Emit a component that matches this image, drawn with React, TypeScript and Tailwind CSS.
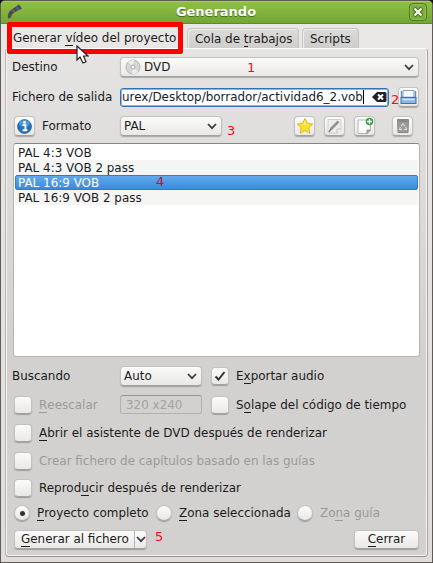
import type { ReactNode } from 'react';

const raised =
  'border border-[#c3c2c0] border-b-[#a3a2a0] bg-gradient-to-b from-[#fbfbfa] to-[#e9e8e6] shadow-[0_1px_1px_rgba(0,0,0,0.25)]';

function Chevron() {
  return (
    <svg width="10" height="7" viewBox="0 0 10 7" className="shrink-0">
      <path d="M1 1 L5 5.2 L9 1" fill="none" stroke="#3a3a3a" strokeWidth="1.7" />
    </svg>
  );
}

function Key({ children }: { children: ReactNode }) {
  return <span className="border-b border-current leading-none inline-block h-[13px]">{children}</span>;
}

function Row({ className, children }: { className: string; children: ReactNode }) {
  return <div className={`flex shrink-0 items-center ${className}`}>{children}</div>;
}

function Combo({ className, children }: { className: string; children: ReactNode }) {
  return (
    <div className={`flex h-5 shrink-0 items-center justify-between rounded-[4px] pr-[4px] pl-[3px] ${raised} ${className}`}>
      <span className="flex items-center">{children}</span>
      <Chevron />
    </div>
  );
}

function Check({ checked = false }: { checked?: boolean }) {
  return (
    <span className={`mr-[7px] flex size-[18px] shrink-0 items-center justify-center rounded-[4px] ${raised}`}>
      {checked && (
        <svg width="12" height="12" viewBox="0 0 12 12">
          <path d="M1.5 6.5 L4.5 9.5 L10.5 2" fill="none" stroke="#333" strokeWidth="2" />
        </svg>
      )}
    </span>
  );
}

function Radio({ checked = false }: { checked?: boolean }) {
  return (
    <span className={`mr-[7px] flex size-4 shrink-0 items-center justify-center rounded-full ${raised}`}>
      {checked && <span className="size-[5px] rounded-full bg-[#333]" />}
    </span>
  );
}

function Tool({ className = '', children }: { className?: string; children: ReactNode }) {
  return (
    <span className={`flex h-5 w-[21px] shrink-0 items-center justify-center rounded-[4px] ${raised} ${className}`}>
      {children}
    </span>
  );
}

function Note({ className, children }: { className: string; children: ReactNode }) {
  return <span className={`absolute text-[13px] leading-4 ${className}`}>{children}</span>;
}

export default function App() {
  return (
    <div className="relative flex h-[563px] w-[433px] flex-col overflow-hidden bg-[#111] font-['DejaVu_Sans',sans-serif] text-[11.95px] leading-4 whitespace-nowrap text-[#1c1c1c]">
      <div className="flex h-full flex-col overflow-hidden rounded-t-[5px] border border-[#615b57] bg-gradient-to-b from-[#e9e8e7] to-[#dedddb]">
        <header className="flex h-[23px] shrink-0 items-center justify-between border-b border-[#5e8a29] bg-gradient-to-b from-[#8fc143] to-[#74a636] pr-[5px] pl-[6px] shadow-[inset_0_1px_0_#a4cc61]">
          <svg width="16" height="16" viewBox="0 0 16 16">
            <path d="M1 14.5 Q0 9 4 6 L12 0.5 L15 4.5 L9 7.5 Q4 10 4 13.5 Z" fill="#474b52" />
            <path d="M5 5.5 L8 8" stroke="#8a5450" strokeWidth="2" />
            <path d="M9 3 L11.5 6" stroke="#46638a" strokeWidth="2" />
            <path d="M1.5 10.5 L4 12" stroke="#6b4c4c" strokeWidth="1.5" />
          </svg>
          <span className="text-[13px] font-bold text-white [text-shadow:0_1px_1px_#41651b]">Generando</span>
          <span className="flex size-[18px] items-center justify-center rounded-[4px] border border-[#50791f] bg-[#7eae3e] shadow-[inset_0_0_0_1px_#91bd55]">
            <svg width="10" height="10" viewBox="0 0 10 10">
              <path d="M1 1 L9 9 M9 1 L1 9" stroke="#48701d" strokeWidth="4.2" />
              <path d="M1.5 1.5 L8.5 8.5 M8.5 1.5 L1.5 8.5" stroke="#f6f9f1" strokeWidth="2.2" />
            </svg>
          </span>
        </header>

        <nav className="flex h-6 shrink-0 items-end pl-[5px]">
          <div className="flex h-[23px] w-[177px] items-center pt-[3px] pl-[7px]">
            <span>Generar <Key>v</Key>ídeo del proyecto</span>
          </div>
          <div className="mt-1 ml-[4px] flex h-5 w-[112px] items-center rounded-t-[4px] border border-b-0 border-[#c4c3c1] bg-gradient-to-b from-[#dcdbda] to-[#cfcecc] pl-[7px] shadow-[inset_1px_1px_0_#efeeed]">
            <span>Cola de <Key>t</Key>rabajos</span>
          </div>
          <div className="ml-[3px] flex h-5 w-[57px] items-center rounded-t-[4px] border border-b-0 border-[#c4c3c1] bg-gradient-to-b from-[#dcdbda] to-[#cfcecc] pl-[7px] shadow-[inset_1px_1px_0_#efeeed]">
            Scripts
          </div>
        </nav>

        <main className="mx-[4px] flex h-[509px] shrink-0 flex-col rounded-[4px] border border-t-white border-r-[#a5a4a1] border-b-[#92918e] border-l-[#b9b7b4] bg-gradient-to-b from-[#e5e4e3] via-[#d2d1cf] via-60% to-[#d2d1cf] pt-[3px] pr-[8px] pl-[6px] shadow-[inset_-1px_-1px_0_#f5f5f5,inset_1px_0_0_#f2f2f1]">
          <Row className="h-[30px]">
            <span className="w-[108px] shrink-0">Destino</span>
            <Combo className="w-[299px]">
              <svg width="16" height="16" viewBox="0 0 16 16" className="mr-[3px] ml-px">
                <circle cx="8" cy="8" r="7" fill="#d5d5d5" stroke="#b5b5b5" />
                <path d="M8 8 L3 3 A7 7 0 0 1 9 1 Z M8 8 L13 13 A7 7 0 0 1 7 15 Z" fill="#eeeeee" />
                <circle cx="8" cy="8" r="2" fill="#f7f7f7" stroke="#aaa" />
              </svg>
              DVD
            </Combo>
          </Row>

          <Row className="h-[30px]">
            <span className="w-[108px] shrink-0">Fichero de salida</span>
            <div className="flex h-[19px] w-[269px] shrink-0 items-center justify-between rounded-[3px] border border-[#3870b2] bg-white pr-[1px] pl-[1px] shadow-[inset_0_0_0_1px_#8bb6e4]">
              <span className="flex items-center">
                <span>urex/Desktop/borrador/actividad6_2.vob</span>
                <span className="h-[14px] w-px bg-black" />
              </span>
              <svg width="15" height="12" viewBox="0 0 15 12">
                <path d="M0 6 L5 1 H13 Q14.5 1 14.5 2.5 V9.5 Q14.5 11 13 11 H5 Z" fill="#222" />
                <path d="M6 3.5 L11 8.5 M11 3.5 L6 8.5" stroke="#fff" strokeWidth="2" />
              </svg>
            </div>
            <Tool className="ml-[9px]">
              <svg width="17" height="16" viewBox="0 0 17 16" className="shrink-0">
                <path d="M3 1.5 H14 V9 H3 Z" fill="#f8fafc" stroke="#7f9fc4" />
                <path d="M1.5 2 V8.5 H15.5 V2" fill="none" stroke="#5d8dc4" strokeWidth="1.3" />
                <rect x="1" y="8.5" width="15" height="6" fill="#8fb6e2" stroke="#3972b5" />
                <path d="M2.5 10.5 H14.5" stroke="#d5e6f7" strokeWidth="1.5" />
              </svg>
            </Tool>
          </Row>

          <Row className="h-7">
            <Tool className="ml-[2px]">
              <svg width="15" height="15" viewBox="0 0 16 16">
                <circle cx="8" cy="8" r="7.3" fill="#2573bd" stroke="#185798" />
                <ellipse cx="8" cy="4.6" rx="5.7" ry="3.6" fill="#5397d4" />
                <path d="M6 6.5 H9 V12 M6 12 H11" stroke="#fff" strokeWidth="2" fill="none" />
                <circle cx="8" cy="3.6" r="1.4" fill="#fff" />
              </svg>
            </Tool>
            <span className="ml-[7px] w-[78px] shrink-0">Formato</span>
            <Combo className="w-[102px]">PAL</Combo>
            <Tool className="ml-[72px]">
              <svg width="18" height="18" viewBox="0 0 18 18" className="shrink-0">
                <path d="M9 1.5 L11.4 6.3 L16.7 7.1 L12.9 10.8 L13.8 16.1 L9 13.6 L4.2 16.1 L5.1 10.8 L1.3 7.1 L6.6 6.3 Z" fill="#fbe02a" stroke="#d9b92c" strokeLinejoin="round" />
                <path d="M9 3.5 L10.6 7.4 L14 8 H4 L7.3 7.4 Z" fill="#fff07c" />
              </svg>
            </Tool>
            <Tool className="ml-[9px]">
              <svg width="17" height="16" viewBox="0 0 17 16" className="shrink-0">
                <path d="M2 1.5 H15 V11 L11 15 H2 Z" fill="#ededec" stroke="#d0d0ce" />
                <path d="M11 15 V11 H15" fill="#f7f7f7" stroke="#bdbdbb" />
                <path d="M5 11 L12.5 3.5" stroke="#939391" strokeWidth="2.6" />
                <path d="M3 14 L5.5 10.5" stroke="#777" strokeWidth="1.4" />
              </svg>
            </Tool>
            <Tool className="ml-[9px]">
              <svg width="19" height="18" viewBox="0 0 19 18" className="shrink-0">
                <path d="M3 3 H15.5 V13 L12 16.5 H3 Z" fill="#fcfcfc" stroke="#b3b4b2" />
                <path d="M12 16.5 V13 H15.5 Z" fill="#b9bab8" stroke="#8f8f8d" />
                <circle cx="14.5" cy="4.5" r="3.7" fill="#2d9b38" />
                <path d="M12 4.5 H17 M14.5 2 V7" stroke="#fff" strokeWidth="1.4" />
              </svg>
            </Tool>
            <Tool className="ml-[17px]">
              <svg width="14" height="16" viewBox="0 0 14 16" className="shrink-0">
                <path d="M1.5 1.5 H12.5 L12 14.5 H2 Z" fill="#9b9b99" stroke="#868684" strokeLinejoin="round" />
                <path d="M2.5 3 H11.5" stroke="#777775" strokeWidth="1.2" />
                <path d="M5.2 8 L7 5.8 L8.8 8 M9.8 9 L10.5 11.5 H8 M6 11.5 H3.5 L4.4 9" fill="none" stroke="#dededc" strokeWidth="1.1" />
              </svg>
            </Tool>
          </Row>

          <div className="mt-[3px] ml-[1px] h-[214px] w-[407px] shrink-0 rounded-[3px] border border-[#b5b4b1] border-t-[#868582] bg-white p-[1px]">
            <div className="h-[15px] pl-[3px]">PAL 4:3 VOB</div>
            <div className="h-[15px] bg-[#f5f5f4] pl-[3px]">PAL 4:3 VOB 2 pass</div>
            <div className="h-[15px] rounded-[2px] border border-[#347bc7] bg-gradient-to-b from-[#62a8ed] to-[#398add] pl-[2px] leading-[14px] text-white">PAL 16:9 VOB</div>
            <div className="h-[15px] bg-[#f5f5f4] pl-[3px]">PAL 16:9 VOB 2 pass</div>
          </div>

          <Row className="mt-[5px] h-7">
            <span className="w-[108px] shrink-0">Buscando</span>
            <Combo className="mr-[9px] w-[82px]">Auto</Combo>
            <Check checked />
            <span>E<Key>x</Key>portar audio</span>
          </Row>
          <Row className="h-[29px] pl-[2px]">
            <Check />
            <span className="w-[81px] shrink-0 text-[#9b9a98]"><Key>R</Key>eescalar</span>
            <span className="mr-[9px] flex h-[19px] w-[82px] shrink-0 items-center rounded-[3px] border border-[#b2b1af] border-t-[#969593] pl-[5px] text-[#a3a2a0]">320 x240</span>
            <Check />
            <span>S<Key>o</Key>lape del código de tiempo</span>
          </Row>
          <Row className="h-7 pl-[2px]">
            <Check />
            <span><Key>A</Key>brir el asistente de DVD después de renderizar</span>
          </Row>
          <Row className="h-[27px] pl-[2px] text-[#9b9a98]">
            <Check />
            <span>Crear fichero de capítulos basado en las guías</span>
          </Row>
          <Row className="h-[27px] pl-[2px]">
            <Check />
            <span>Reprod<Key>u</Key>cir después de renderizar</span>
          </Row>
          <Row className="h-6 pl-[2px]">
            <Radio checked />
            <span className="w-[119px] shrink-0"><Key>P</Key>royecto completo</span>
            <Radio />
            <span className="w-[118px] shrink-0"><Key>Z</Key>ona seleccionada</span>
            <Radio />
            <span className="text-[#9b9a98]">Zo<Key>n</Key>a guía</span>
          </Row>
          <Row className="h-7 justify-between pl-[2px]">
            <div className={`flex h-[19px] w-[133px] items-center rounded-[4px] ${raised}`}>
              <span className="w-[120px] pl-[6px]"><Key>G</Key>enerar al fichero</span>
              <span className="flex h-full w-[12px] items-center justify-center border-l border-[#b4b3b1]">
                <Chevron />
              </span>
            </div>
            <div className={`flex h-[19px] w-[65px] items-center justify-center rounded-[4px] ${raised}`}>
              <span><Key>C</Key>errar</span>
            </div>
          </Row>
        </main>
      </div>

      <div className="absolute top-[22px] left-[7px] h-[32px] w-[176px] rounded-[2px] border-[5px] border-[#fe0000]" />
      <svg className="absolute top-[45px] left-[76px]" width="13" height="20" viewBox="0 0 13 20">
        <path d="M1 1 V15 L4 12 L7 18 L10 16.7 L7.5 11 H12 Z" fill="#fff" stroke="#222" strokeWidth="1.2" />
      </svg>
      <Note className="top-[60px] left-[247px] text-[#ee1010]">1</Note>
      <Note className="top-[92px] left-[391px] text-[#ee1010]">2</Note>
      <Note className="top-[123px] left-[227px] text-[#ee1010]">3</Note>
      <Note className="top-[174px] left-[156px] text-[#b8142c]">4</Note>
      <Note className="top-[529px] left-[155px] text-[#ee1010]">5</Note>
    </div>
  );
}
